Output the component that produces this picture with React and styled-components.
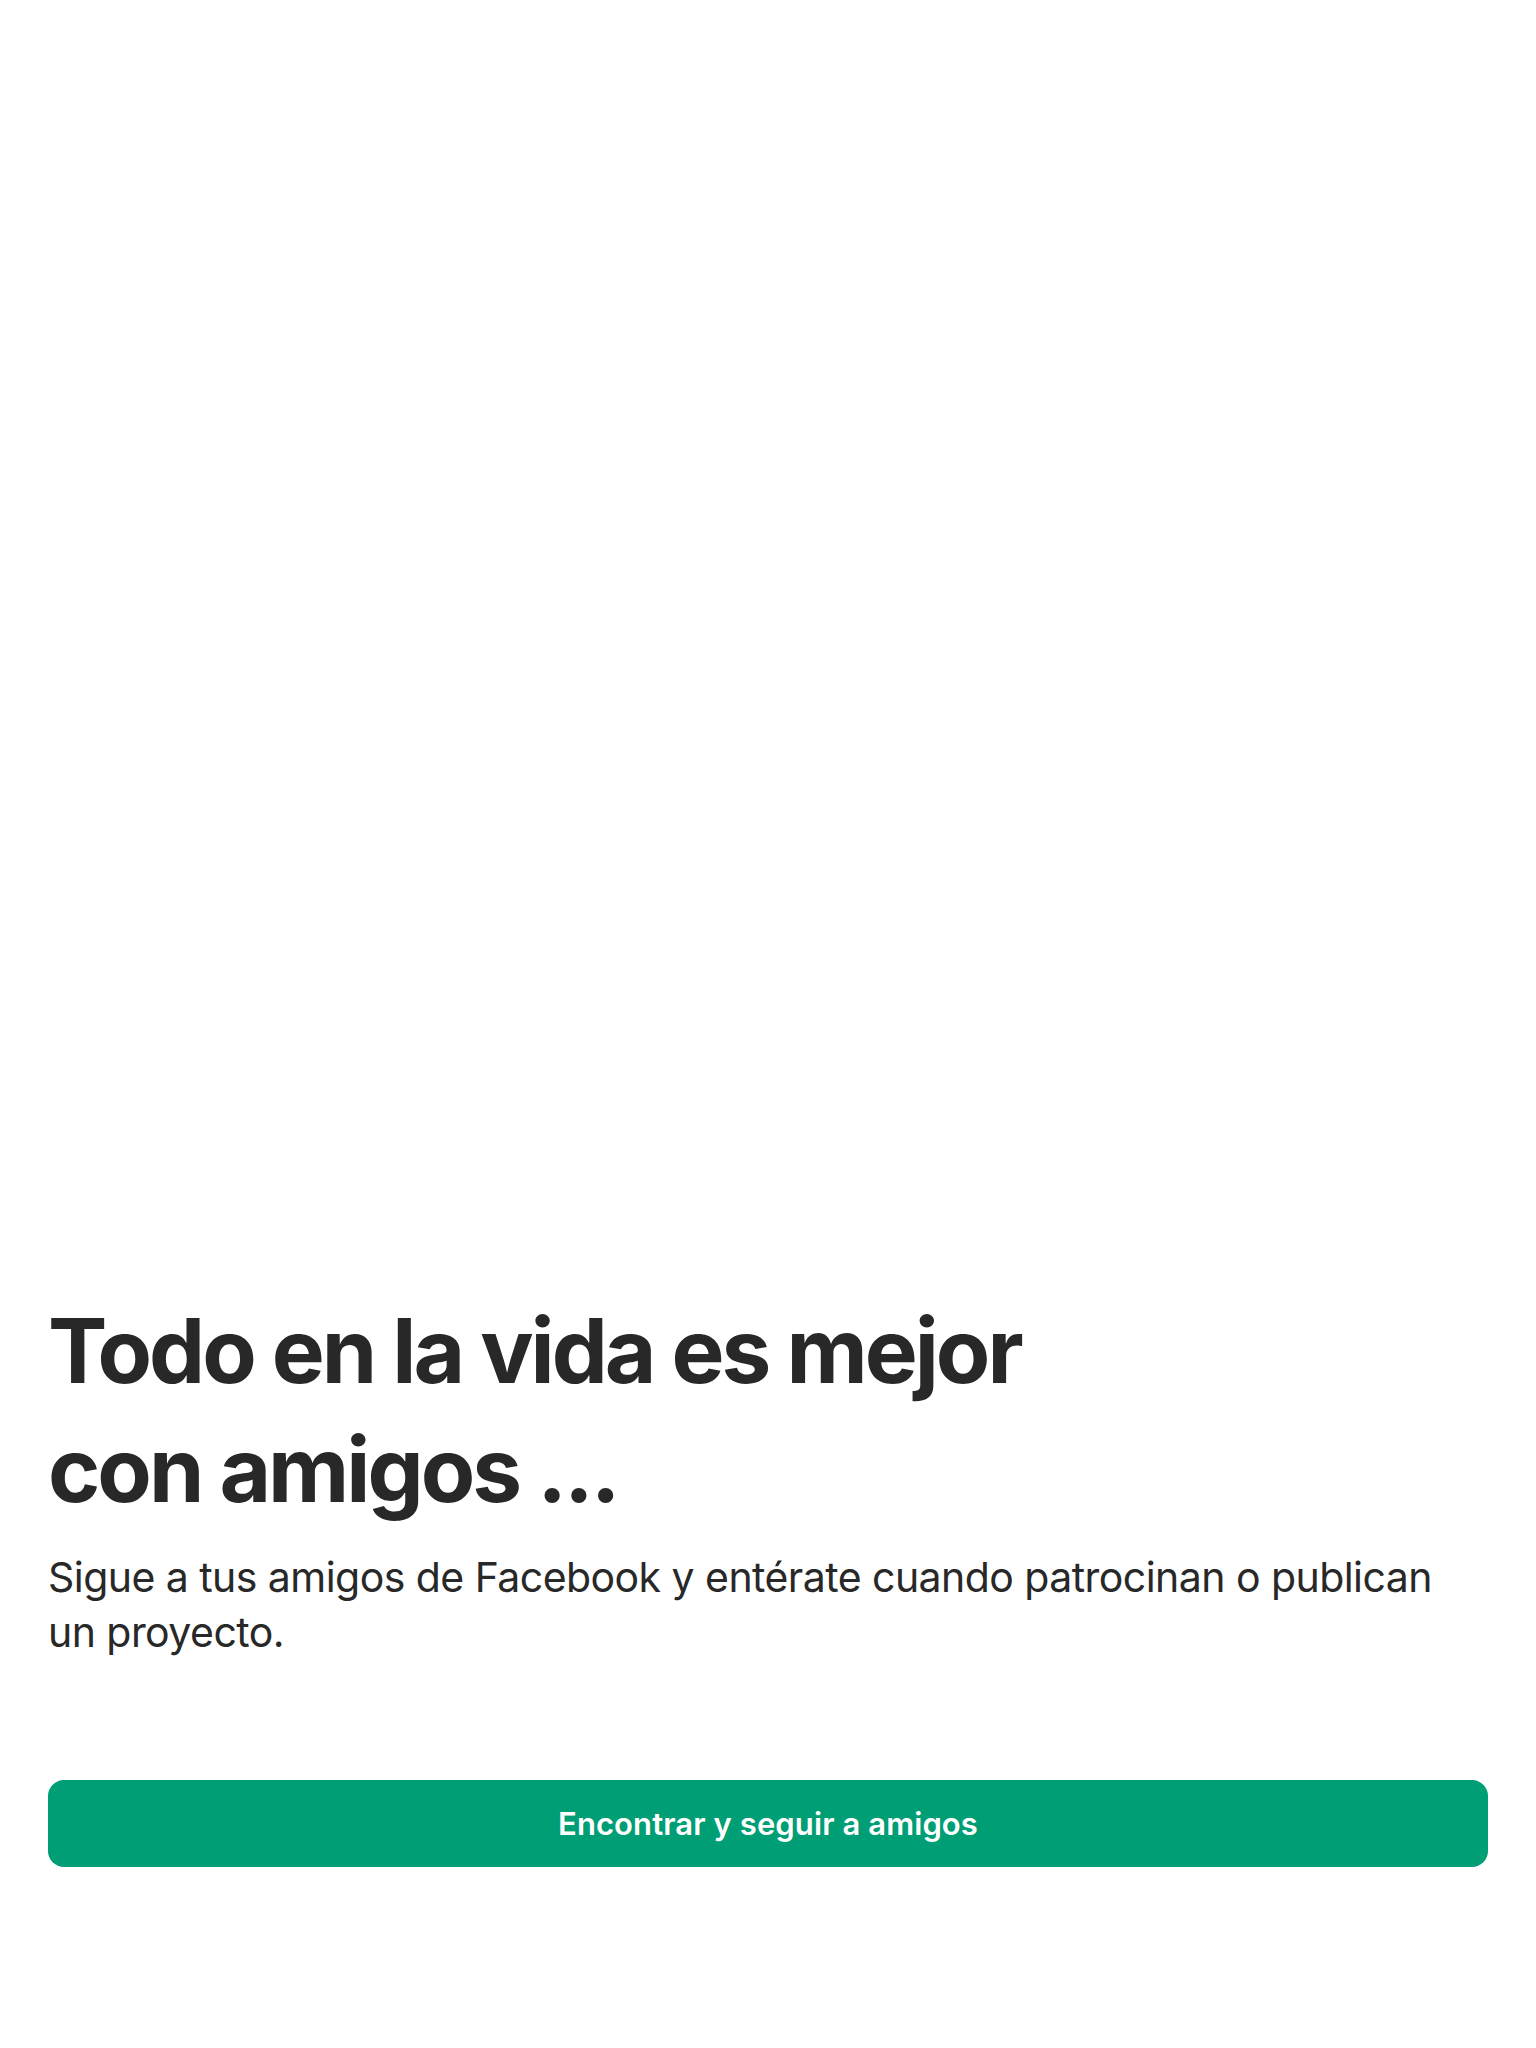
import React from "react";
import styled, { createGlobalStyle } from "styled-components";

const GlobalStyle = createGlobalStyle`
  html, body {
    margin: 0;
    padding: 0;
    background: #ffffff;
  }
  body {
    font-family: Inter, "Noto Sans", "Liberation Sans", sans-serif;
    color: #282828;
    -webkit-font-smoothing: antialiased;
  }
`;

const Screen = styled.div`
  height: 2048px;
  box-sizing: border-box;
  display: flex;
  flex-direction: column;
  justify-content: flex-end;
  padding: 0 48px 181px;
`;

const Title = styled.h1`
  margin: 0;
  max-width: 1060px;
  font-size: 89px;
  line-height: 119px;
  font-weight: 700;
  letter-spacing: -3px;
  color: #282828;
`;

const Lead = styled.p`
  margin: 21px 0 0;
  font-size: 41px;
  line-height: 55px;
  font-weight: 400;
  letter-spacing: -0.55px;
  color: #282828;
`;

const PrimaryButton = styled.button`
  margin-top: 120px;
  width: 100%;
  height: 87px;
  border: none;
  border-radius: 16px;
  background: #009e74;
  color: #ffffff;
  font-family: inherit;
  font-size: 31px;
  font-weight: 600;
  letter-spacing: 0.1px;
  cursor: pointer;
  display: flex;
  align-items: center;
  justify-content: center;
`;

export default function App() {
  return (
    <>
      <GlobalStyle />
      <Screen>
        <Title>Todo en la vida es mejor con amigos ...</Title>
        <Lead>
          Sigue a tus amigos de Facebook y entérate cuando patrocinan o publican
          un proyecto.
        </Lead>
        <PrimaryButton>Encontrar y seguir a amigos</PrimaryButton>
      </Screen>
    </>
  );
}
